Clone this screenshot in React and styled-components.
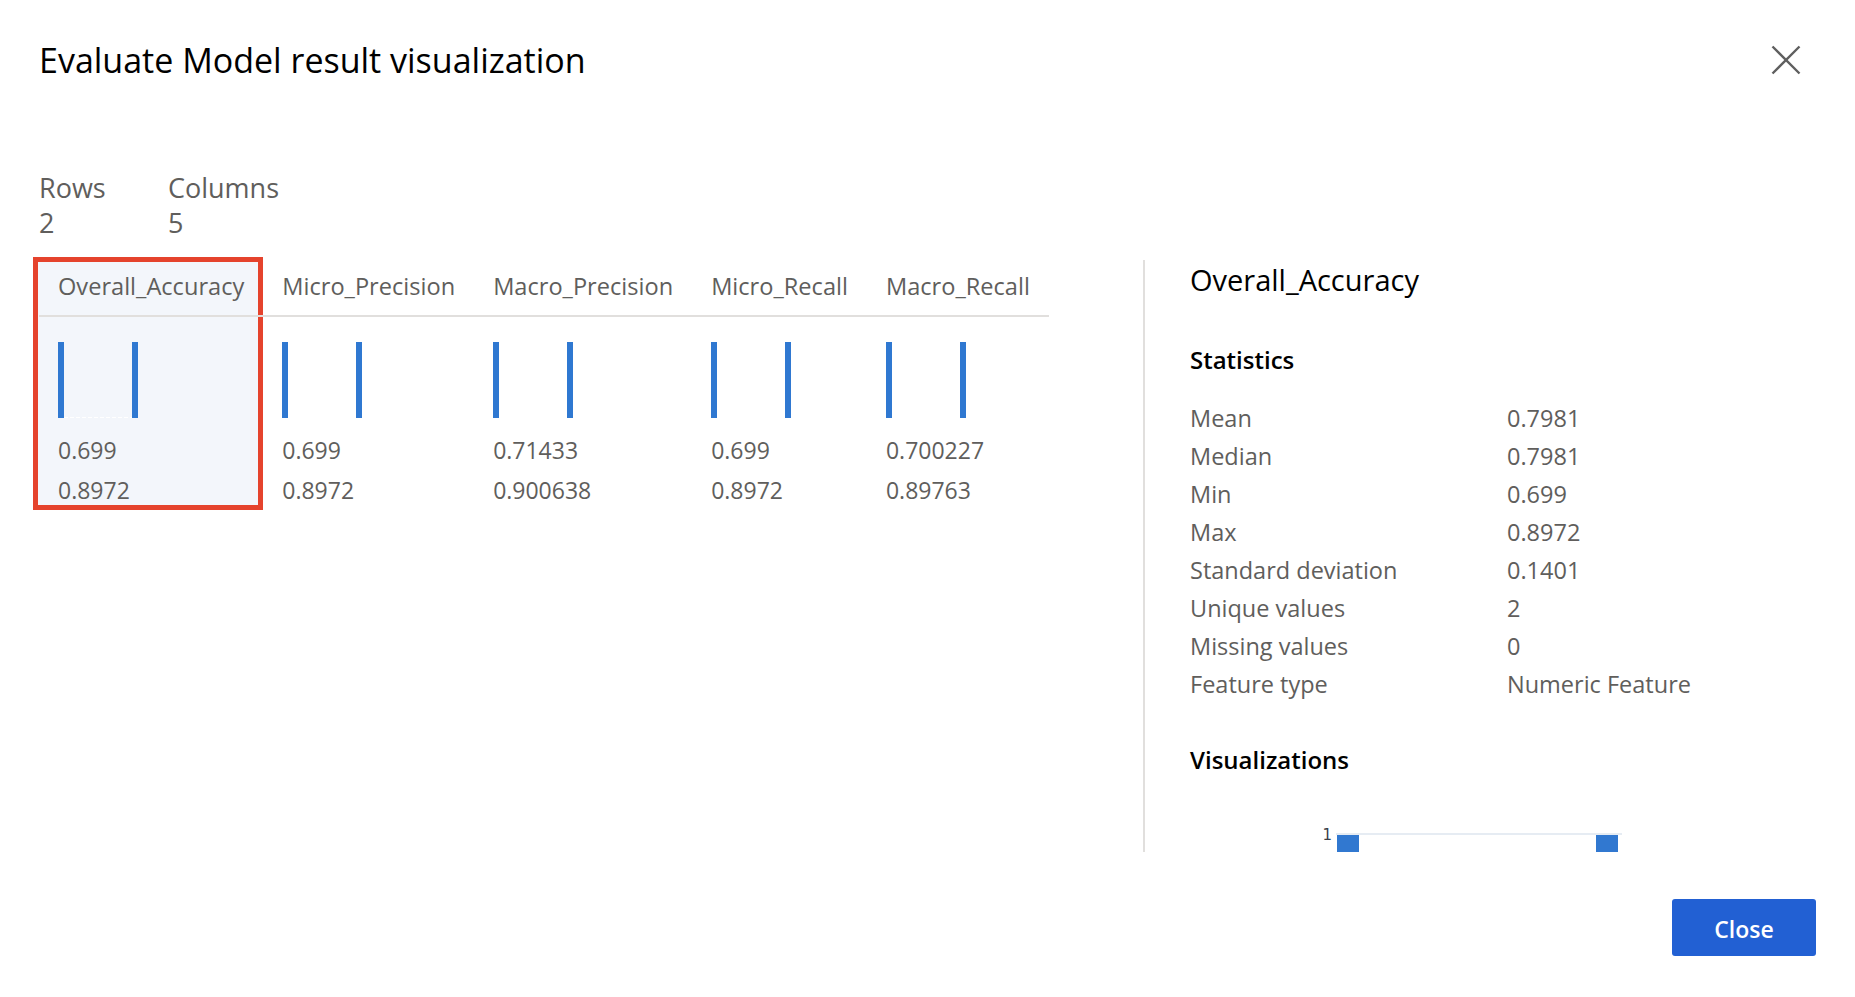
import React from 'react'
import styled, { createGlobalStyle } from 'styled-components'

const GlobalStyle = createGlobalStyle`
  body {
    margin: 0;
    background: #ffffff;
    font-family: "Segoe UI", "Open Sans", sans-serif;
  }
`

const Dialog = styled.div`
  width: 1855px;
  height: 997px;
  box-sizing: border-box;
  padding: 30px 39px 0 39px;
  display: flex;
  flex-direction: column;
`
const Header = styled.div`
  display: flex;
  align-items: center;
  justify-content: space-between;
  height: 60px;
`
const Title = styled.h1`
  margin: 0;
  font-size: 34px;
  line-height: 46px;
  font-weight: 400;
  color: #000000;
`
const IconButton = styled.button`
  width: 60px;
  height: 60px;
  border: none;
  background: transparent;
  padding: 0;
  display: flex;
  align-items: center;
  justify-content: center;
`
const Summary = styled.div`
  display: flex;
  margin-top: 80px;
`
const SummaryItem = styled.div`
  min-width: 129px;
  font-size: 27px;
  line-height: 35px;
  color: #605e5c;
`
const Body = styled.div`
  display: flex;
  margin-top: 17px;
`
const LeftPane = styled.div`
  flex: 1;
  display: flex;
  align-items: flex-start;
  margin-left: -6px;
`
const Column = styled.div`
  display: flex;
  flex-direction: column;
  padding-left: ${(props) => (props.$selected ? '6px' : '0')};
  background: ${(props) => (props.$selected ? '#f3f6fb' : 'transparent')};
  box-shadow: ${(props) => (props.$selected ? 'inset 0 0 0 5px #e5432d' : 'none')};
`
const HeadCell = styled.div`
  height: 58px;
  padding: 0 19px;
  display: flex;
  align-items: center;
  font-size: 23.6px;
  color: #605e5c;
  border-bottom: 2px solid #e1dfdd;
  white-space: nowrap;
`
const Histogram = styled.svg`
  display: block;
  margin: 25px 19px 12px;
`
const Value = styled.div`
  padding: 0 19px;
  font-size: 23px;
  line-height: 40px;
  color: #605e5c;
`
const RightPane = styled.div`
  width: 673px;
  height: 592px;
  margin-top: 3px;
  box-sizing: border-box;
  border-left: 2px solid #e1dfdd;
  padding-left: 45px;
  overflow: hidden;
`
const PaneTitle = styled.h2`
  margin: 0;
  font-size: 29px;
  line-height: 40px;
  font-weight: 400;
  color: #000000;
`
const SectionTitle = styled.h3`
  margin: ${(props) => props.$gap}px 0 0;
  font-size: 24px;
  line-height: 34px;
  font-weight: 600;
  color: #000000;
`
const StatGrid = styled.div`
  display: grid;
  grid-template-columns: 317px 1fr;
  margin-top: 22px;
  font-size: 23.5px;
  line-height: 38px;
  color: #605e5c;
`
const Footer = styled.div`
  display: flex;
  justify-content: flex-end;
  margin-top: 47px;
`
const PrimaryButton = styled.button`
  width: 144px;
  height: 57px;
  border: none;
  border-radius: 3px;
  background: #2260d3;
  color: #ffffff;
  font-family: "Segoe UI", "Open Sans", sans-serif;
  font-size: 23px;
  font-weight: 600;
  padding-top: 3px;
`

const columns = [
  { name: 'Overall_Accuracy', values: ['0.699', '0.8972'] },
  { name: 'Micro_Precision', values: ['0.699', '0.8972'] },
  { name: 'Macro_Precision', values: ['0.71433', '0.900638'] },
  { name: 'Micro_Recall', values: ['0.699', '0.8972'] },
  { name: 'Macro_Recall', values: ['0.700227', '0.89763'] },
]

const stats = [
  ['Mean', '0.7981'],
  ['Median', '0.7981'],
  ['Min', '0.699'],
  ['Max', '0.8972'],
  ['Standard deviation', '0.1401'],
  ['Unique values', '2'],
  ['Missing values', '0'],
  ['Feature type', 'Numeric Feature'],
]

const MiniBars = () => (
  <Histogram width="82" height="76" viewBox="0 0 82 76">
    <line x1="6" y1="75.5" x2="74" y2="75.5" stroke="#ffffff" strokeDasharray="4 2" />
    <rect x="0" y="0" width="6" height="76" fill="#2f78d1" />
    <rect x="74" y="0" width="6" height="76" fill="#2f78d1" />
  </Histogram>
)

const App = () => {
  return (
    <Dialog>
      <GlobalStyle />
      <Header>
        <Title>Evaluate Model result visualization</Title>
        <IconButton aria-label="Close">
          <svg width="30" height="30" viewBox="0 0 30 30">
            <path d="M1.5 1.5 L28.5 28.5 M28.5 1.5 L1.5 28.5" stroke="#5f5f5f" strokeWidth="2.4" />
          </svg>
        </IconButton>
      </Header>

      <Summary>
        <SummaryItem>
          <div>Rows</div>
          <div>2</div>
        </SummaryItem>
        <SummaryItem>
          <div>Columns</div>
          <div>5</div>
        </SummaryItem>
      </Summary>

      <Body>
        <LeftPane>
          {columns.map((col, i) => (
            <Column key={col.name} $selected={i === 0}>
              <HeadCell>{col.name}</HeadCell>
              <MiniBars />
              {col.values.map((v, j) => (
                <Value key={j}>{v}</Value>
              ))}
            </Column>
          ))}
        </LeftPane>

        <RightPane>
          <PaneTitle>Overall_Accuracy</PaneTitle>
          <SectionTitle $gap={43}>Statistics</SectionTitle>
          <StatGrid>
            {stats.map(([label, value]) => (
              <React.Fragment key={label}>
                <div>{label}</div>
                <div>{value}</div>
              </React.Fragment>
            ))}
          </StatGrid>
          <SectionTitle $gap={40}>Visualizations</SectionTitle>
          <svg width="480" height="120" viewBox="0 0 480 120" style={{ display: 'block' }}>
            <text x="142" y="63" textAnchor="end" fontSize="15" fontFamily="DejaVu Sans" fill="#3b3f4a">1</text>
            <line x1="146" y1="57" x2="432" y2="57" stroke="#e6ecf3" strokeWidth="2" />
            <rect x="147" y="58" width="22" height="60" fill="#3178d0" />
            <rect x="406" y="58" width="22" height="60" fill="#3178d0" />
          </svg>
        </RightPane>
      </Body>

      <Footer>
        <PrimaryButton>Close</PrimaryButton>
      </Footer>
    </Dialog>
  )
}

export default App
